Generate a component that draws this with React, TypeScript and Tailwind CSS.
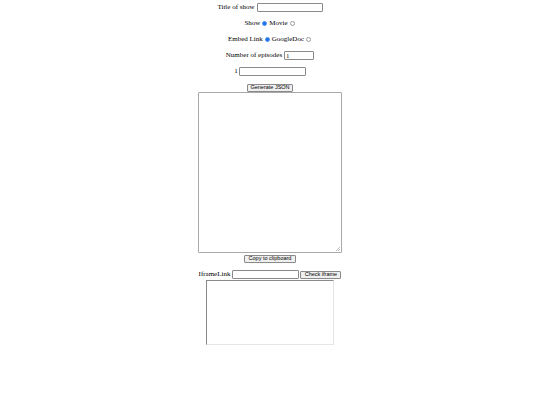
import React from 'react';

const serif = { fontFamily: '"Liberation Serif", "Times New Roman", serif' };

const Radio = ({ checked }: { checked?: boolean }) =>
  checked ? (
    <span className="inline-block w-[5px] h-[5px] rounded-full bg-[#1a73e8] border border-[#4d8ff0] mx-[1px]" />
  ) : (
    <span className="inline-block w-[5px] h-[5px] rounded-full border border-[#9a9a9a] bg-white mx-[1px]" />
  );

const Input = ({ w, value }: { w: string; value?: string }) => (
  <span className={`inline-flex items-center ${w} h-[9px] border border-[#8a8a8a] rounded-[1px] bg-white px-[1px] text-[6px] leading-none`}>
    {value}
  </span>
);

const Btn = ({ label, w }: { label: string; w: string }) => (
  <span
    className={`inline-flex items-center justify-center ${w} h-[8px] border border-[#8a8a8a] rounded-[1px] bg-[#efefef] text-[5.5px] leading-none text-black`}
    style={{ fontFamily: '"Liberation Sans", Arial, sans-serif' }}
  >
    {label}
  </span>
);

export default function App() {
  return (
    <div className="w-[540px] h-[405px] bg-white text-black text-[7px] leading-none" style={serif}>
      <div className="flex flex-col items-center pt-[3px]">
        {/* show info */}
        <div className="flex items-center gap-[2px] h-[9px]">
          <span>Title of show</span>
          <Input w="w-[66px]" />
        </div>
        <div className="flex items-center gap-[1px] h-[9px] mt-[7px]">
          <span>Show</span>
          <Radio checked />
          <span>Movie</span>
          <Radio />
        </div>
        <div className="flex items-center gap-[1px] h-[9px] mt-[7px]">
          <span>Embed Link</span>
          <Radio checked />
          <span>GoogleDoc</span>
          <Radio />
        </div>
        <div className="flex items-center gap-[2px] h-[9px] mt-[7px]">
          <span>Number of episodes</span>
          <Input w="w-[30px]" value="1" />
        </div>
        {/* episode links */}
        <div className="flex items-center gap-[1px] h-[9px] mt-[7px]">
          <span>1</span>
          <Input w="w-[67px]" />
        </div>
        <div className="mt-[8px]">
          <Btn label="Generate JSON" w="w-[46px]" />
        </div>
        {/* json output */}
        <div className="relative w-[144px] h-[161px] border border-[#a9a9a9] rounded-[1px] bg-white">
          <svg className="absolute right-[1px] bottom-[1px]" width="4" height="4" viewBox="0 0 4 4">
            <path d="M4 0L0 4M4 2L2 4" stroke="#999" strokeWidth="0.6" />
          </svg>
        </div>
        <div className="mt-[2px]">
          <Btn label="Copy to clipboard" w="w-[52px]" />
        </div>
        {/* iframe check */}
        <div className="flex items-center gap-[1px] h-[9px] mt-[7px]">
          <span className="mr-[1px]">IframeLink</span>
          <Input w="w-[67px]" />
          <Btn label="Check iframe" w="w-[41px]" />
        </div>
        <div className="w-[128px] h-[65px] mt-[1px] border border-t-[#8a8a8a] border-l-[#8a8a8a] border-r-[#e5e5e5] border-b-[#e5e5e5] bg-white" />
      </div>
    </div>
  );
}
